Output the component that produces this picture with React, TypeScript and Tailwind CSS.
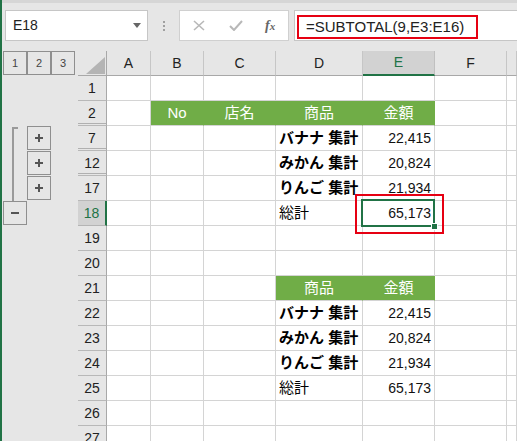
import React from "react";

type Cell = { t: string; kind?: "green" | "jp" | "jpb" | "num"; sel?: boolean };

const FONT = { fontFamily: '"Liberation Sans", "Noto Sans CJK JP", sans-serif' };

const rows = [1, 2, 7, 12, 17, 18, 19, 20, 21, 22, 23, 24, 25, 26, 27];
const cols = ["A", "B", "C", "D", "E", "F", ""];
const hiddenAfter = new Set([2, 7, 12]);

const data: Record<number, Record<string, Cell>> = {
  2: {
    B: { t: "No", kind: "green" },
    C: { t: "店名", kind: "green" },
    D: { t: "商品", kind: "green" },
    E: { t: "金額", kind: "green" },
  },
  7: { D: { t: "バナナ 集計", kind: "jpb" }, E: { t: "22,415", kind: "num" } },
  12: { D: { t: "みかん 集計", kind: "jpb" }, E: { t: "20,824", kind: "num" } },
  17: { D: { t: "りんご 集計", kind: "jpb" }, E: { t: "21,934", kind: "num" } },
  18: { D: { t: "総計", kind: "jp" }, E: { t: "65,173", kind: "num", sel: true } },
  21: { D: { t: "商品", kind: "green" }, E: { t: "金額", kind: "green" } },
  22: { D: { t: "バナナ 集計", kind: "jpb" }, E: { t: "22,415", kind: "num" } },
  23: { D: { t: "みかん 集計", kind: "jpb" }, E: { t: "20,824", kind: "num" } },
  24: { D: { t: "りんご 集計", kind: "jpb" }, E: { t: "21,934", kind: "num" } },
  25: { D: { t: "総計", kind: "jp" }, E: { t: "65,173", kind: "num" } },
};

function OutlineBtn({ children }: { children: React.ReactNode }) {
  return (
    <div className="w-[24px] h-[24px] border border-[#8f8f8f] flex items-center justify-center text-[#444] leading-none">
      {children}
    </div>
  );
}

function Plus() {
  return (
    <svg width="10" height="10" viewBox="0 0 10 10">
      <path d="M5 1v8M1 5h8" stroke="#555" strokeWidth="2" />
    </svg>
  );
}

function GridCell({ cell }: { cell?: Cell }) {
  if (!cell) {
    return <div className="h-[25px] border-r border-b border-[#d4d4d4]" />;
  }
  if (cell.kind === "green") {
    return (
      <div className="h-[25px] border-r border-b border-r-[#70ad47] border-b-[#d4d4d4] bg-[#70ad47] text-white text-[15px] flex items-center justify-center">
        {cell.t}
      </div>
    );
  }
  if (cell.kind === "num") {
    return (
      <div className="relative h-[25px] border-r border-b border-[#d4d4d4] text-[14px] text-[#111] flex items-center justify-end pr-[3px]">
        {cell.t}
        {cell.sel && (
          <>
            <div className="absolute z-10 -left-[2px] -top-[2px] -right-[1px] -bottom-[2px] border-2 border-[#217346]" />
            <div className="absolute z-10 -right-[4px] -bottom-[5px] w-[7px] h-[7px] bg-[#217346] border border-white" />
            <div className="absolute z-20 -left-[8px] -top-[7px] -right-[10px] -bottom-[9px] border-2 border-[#e60012]" />
          </>
        )}
      </div>
    );
  }
  return (
    <div
      className={
        "h-[25px] border-r border-b border-[#d4d4d4] text-[15px] text-black flex items-center pl-[3px] whitespace-nowrap " +
        (cell.kind === "jpb" ? "font-bold" : "")
      }
    >
      {cell.t}
    </div>
  );
}

export default function App() {
  return (
    <div
      className="w-[517px] h-[441px] overflow-hidden bg-[#e6e6e6] border-l-2 border-[#217346] flex flex-col"
      style={FONT}
    >
      {/* top bar */}
      <div className="h-[51px] shrink-0 flex flex-col">
        <div className="h-[3px] bg-[#d6d6d6]" />
        <div className="flex items-start pt-[7px]">
          <div className="ml-[3px] w-[143px] h-[31px] bg-white border border-[#c6c6c6] flex items-center justify-between pl-[7px] pr-[6px]">
            <span className="text-[14px] text-[#222]">E18</span>
            <svg width="8" height="5" viewBox="0 0 8 5">
              <path d="M0 0h8L4 5z" fill="#666" />
            </svg>
          </div>
          <div className="w-[31px] h-[31px] flex flex-col items-center justify-center gap-[2px]">
            <div className="w-[2px] h-[2px] bg-[#a0a0a0]" />
            <div className="w-[2px] h-[2px] bg-[#a0a0a0]" />
            <div className="w-[2px] h-[2px] bg-[#a0a0a0]" />
          </div>
          <div className="w-[110px] h-[31px] bg-white border border-[#d0d0d0] flex items-center pl-[13px]">
            <svg width="12" height="11" viewBox="0 0 12 11">
              <path d="M1 1l10 9M11 1L1 10" stroke="#b8b8b8" strokeWidth="1.6" />
            </svg>
            <svg className="ml-[24px]" width="14" height="11" viewBox="0 0 14 11">
              <path d="M1 6l4 4 8-9" stroke="#b8b8b8" strokeWidth="2" fill="none" />
            </svg>
            <span
              className="ml-[22px] text-[14px] italic font-bold text-[#666] leading-none"
              style={{ fontFamily: '"Liberation Serif", serif' }}
            >
              f<span className="text-[11px]">x</span>
            </span>
          </div>
          <div className="ml-[5px] flex-1 h-[31px] bg-white border-l border-y border-[#c6c6c6] pt-[4px] pl-[2px]">
            <div className="w-[181px] h-[24px] border-2 border-[#e60012] flex items-center pl-[7px] text-[15px] text-[#222] whitespace-nowrap">
              =SUBTOTAL(9,E3:E16)
            </div>
          </div>
        </div>
      </div>

      {/* body */}
      <div className="flex flex-1 min-h-0">
        {/* outline column */}
        <div className="w-[76px] shrink-0 flex flex-col">
          <div className="h-[25px] flex pl-[1px] text-[11px]">
            <OutlineBtn>1</OutlineBtn>
            <OutlineBtn>2</OutlineBtn>
            <OutlineBtn>3</OutlineBtn>
          </div>
          <div className="h-[50px]" />
          <div className="h-[75px] flex">
            <div className="w-[25px] pl-[10px] pt-[1px]">
              <div className="h-full w-[6px] border-l-2 border-t-2 border-[#9a9a9a]" />
            </div>
            <div className="flex flex-col gap-[1px]">
              <OutlineBtn>
                <Plus />
              </OutlineBtn>
              <OutlineBtn>
                <Plus />
              </OutlineBtn>
              <OutlineBtn>
                <Plus />
              </OutlineBtn>
            </div>
          </div>
          <div className="h-[25px] pl-[1px]">
            <OutlineBtn>
              <svg width="10" height="4" viewBox="0 0 10 4">
                <path d="M1 2h8" stroke="#555" strokeWidth="2" />
              </svg>
            </OutlineBtn>
          </div>
        </div>

        {/* sheet grid */}
        <div className="flex-1 grid grid-cols-[29px_44px_53px_72px_87px_72px_72px_1fr] auto-rows-[25px] content-start">
          {/* header row */}
          <div className="h-[25px] border-r border-b border-[#a8a8a8] flex items-end justify-end pr-[1px] pb-[1px]">
            <svg width="19" height="17" viewBox="0 0 19 17">
              <path d="M19 0V17H0z" fill="#b4b4b4" />
            </svg>
          </div>
          {cols.map((c, i) =>
            c === "E" ? (
              <div
                key={i}
                className="h-[25px] bg-[#d2d2d2] border-r border-[#c0c0c0] border-b-2 border-b-[#217346] flex items-center justify-center text-[14px] text-[#217346]"
              >
                {c}
              </div>
            ) : (
              <div
                key={i}
                className="h-[25px] border-r border-b border-r-[#c6c6c6] border-b-[#a8a8a8] flex items-center justify-center text-[14px] text-[#222]"
              >
                {c}
              </div>
            )
          )}

          {rows.map((r) => (
            <React.Fragment key={r}>
              {r === 18 ? (
                <div className="h-[25px] bg-[#d2d2d2] border-r-2 border-r-[#217346] border-b border-b-[#b4b4b4] flex items-center justify-center text-[14px] text-[#217346]">
                  {r}
                </div>
              ) : (
                <div
                  className={
                    "h-[25px] border-r border-b border-r-[#a8a8a8] border-b-[#b8b8b8] flex items-center justify-center text-[14px] text-[#222] " +
                    (hiddenAfter.has(r)
                      ? "shadow-[inset_0_-1px_0_#e6e6e6,inset_0_-2px_0_#b0b0b0]"
                      : "")
                  }
                >
                  {r}
                </div>
              )}
              {cols.map((c, i) => (
                <div key={i} className="bg-white">
                  <GridCell cell={data[r]?.[c]} />
                </div>
              ))}
            </React.Fragment>
          ))}
        </div>
      </div>
    </div>
  );
}
